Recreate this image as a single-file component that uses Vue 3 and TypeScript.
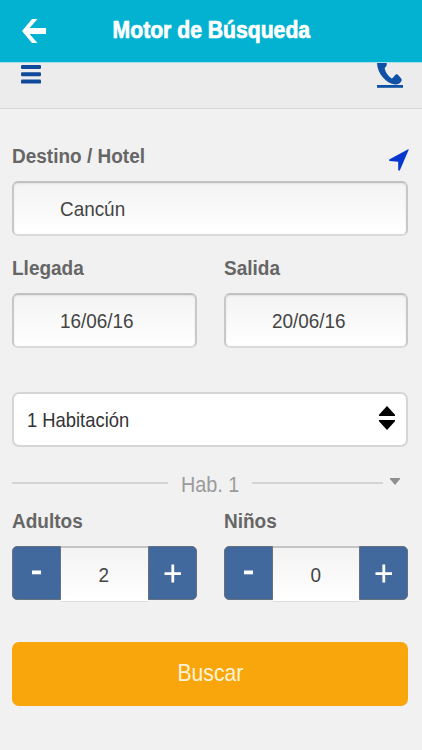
<script setup lang="ts">
import { reactive, ref } from 'vue'

interface Counter {
  label: string
  value: number
}

const destination = ref('Cancún')
const dates = [
  { label: 'Llegada', value: '16/06/16' },
  { label: 'Salida', value: '20/06/16' },
]
const counters = reactive<Counter[]>([
  { label: 'Adultos', value: 2 },
  { label: 'Niños', value: 0 },
])

function step(counter: Counter, delta: number) {
  counter.value = Math.max(0, counter.value + delta)
}
</script>

<template>
  <div class="screen">
    <header class="header">
      <svg class="back" viewBox="0 0 24 24" width="24" height="24">
        <path d="M10 0 H15.5 L7.6 9 H24 V15 H7.6 L15.5 24 H10 L0 12 Z" fill="#fff" />
      </svg>
      <h1 class="title"><span class="squeeze">Motor de Búsqueda</span></h1>
    </header>

    <nav class="toolbar">
      <svg class="menu" viewBox="0 0 20 19" width="20" height="19">
        <g fill="#114a9c">
          <rect y="0" width="20" height="4" rx="1.2" />
          <rect y="7.3" width="20" height="4" rx="1.2" />
          <rect y="14.6" width="20" height="4" rx="1.2" />
        </g>
      </svg>
      <svg class="phone" viewBox="0 0 26 25" width="26" height="25">
        <path
          d="M0 0 H9.7 C10 2 9.8 3 7.6 5.1 C8.2 9.3 10.8 12.8 14.6 15.6 C15.9 15.7 17.4 12.4 18.8 11.6 C19.8 11 20.8 11.6 22.2 13.2 C24.4 15.5 25.5 16.7 24.3 18.3 C22.7 20.6 21 21.7 18.1 21.5 C9 20.4 0.4 10.7 0 0 Z"
          fill="#0f51a6"
        />
        <rect y="22" width="26" height="2.8" fill="#0f51a6" />
      </svg>
    </nav>

    <main class="form">
      <div class="label-row">
        <label class="label"><span class="squeeze">Destino / Hotel</span></label>
        <svg class="locate" viewBox="0 0 20 22" width="20" height="22">
          <path
            d="M19.2 0.2 Q20 0.1 19.6 1.1 L11 21 Q10 22.4 9.2 20.8 V12.7 L0.8 12 Q-0.6 11.4 0.6 10.3 Z"
            fill="#0638cf"
          />
        </svg>
      </div>
      <div class="field"><span class="squeeze">{{ destination }}</span></div>

      <div class="pair dates">
        <div v-for="date in dates" :key="date.label">
          <label class="label"><span class="squeeze">{{ date.label }}</span></label>
          <div class="field"><span class="squeeze">{{ date.value }}</span></div>
        </div>
      </div>

      <div class="select">
        <span class="squeeze">1 Habitación</span>
        <svg viewBox="0 0 16 24" width="16" height="24">
          <path d="M8 0 L16 8.8 V10 H0 V8.8 Z M0 14 H16 V15.2 L8 24 L0 15.2 Z" fill="#000" />
        </svg>
      </div>

      <div class="divider">
        <i class="line"></i>
        <span class="room"><span class="squeeze">Hab. 1</span></span>
        <i class="line"></i>
        <svg class="caret" viewBox="0 0 10 7" width="10" height="7">
          <path d="M0 0 H10 V1 L5 7 L0 1 Z" fill="#8e8e8e" />
        </svg>
      </div>

      <div class="pair counters">
        <div v-for="counter in counters" :key="counter.label">
          <label class="label"><span class="squeeze">{{ counter.label }}</span></label>
          <div class="stepper">
            <button class="step" @click="step(counter, -1)">
              <svg viewBox="0 0 48 52" width="48" height="52">
                <rect x="19" y="23.5" width="9" height="3.8" fill="#fff" />
              </svg>
            </button>
            <span class="count"><span class="squeeze">{{ counter.value }}</span></span>
            <button class="step" @click="step(counter, 1)">
              <svg viewBox="0 0 48 52" width="48" height="52">
                <path d="M15.5 26.7 H32 M23.8 17.6 V35.6" stroke="#fff" stroke-width="2.8" />
              </svg>
            </button>
          </div>
        </div>
      </div>

      <button class="search"><span class="squeeze">Buscar</span></button>
    </main>
  </div>
</template>

<style>
body {
  margin: 0;
  background: #f1f1f1;
}
</style>

<style scoped>
.screen {
  width: 422px;
  height: 750px;
  overflow: hidden;
  background: #f1f1f1;
  font-family: 'Liberation Sans', Arial, sans-serif;
  color: #444;
}

.squeeze {
  display: inline-block;
  transform: scaleX(0.9);
  transform-origin: left center;
  white-space: nowrap;
}

.header {
  display: grid;
  grid-template-columns: 24px 1fr 24px;
  align-items: center;
  height: 62px;
  padding: 0 22px;
  box-sizing: border-box;
  background: #03b2d1;
}

.title {
  margin: 0;
  font-size: 23px;
  line-height: 60px;
  height: 62px;
  text-align: center;
  color: #fff;
  -webkit-text-stroke: 0.7px #fff;
}

.title .squeeze {
  transform: scaleX(0.92);
  transform-origin: center;
}

.toolbar {
  display: flex;
  justify-content: space-between;
  align-items: flex-start;
  height: 47px;
  padding: 0 19px 0 21px;
  box-sizing: border-box;
  border-top: 1px solid #a5e0eb;
  border-bottom: 1px solid #d9d6d6;
  background: #ececec;
}

.menu {
  margin-top: 2px;
}

.form {
  padding: 35px 14px 0 12px;
}

.label-row {
  display: flex;
  justify-content: space-between;
}

.label {
  display: block;
  height: 37px;
  font-size: 20px;
  font-weight: bold;
  line-height: 24px;
  color: #666;
}

.label .squeeze {
  transform: scaleX(0.95);
}

.locate {
  margin: 5px -1px 0 0;
}

.field {
  height: 55px;
  padding-left: 46px;
  box-sizing: border-box;
  border: 2px solid #c8c8c8;
  border-top-color: #c0c0c0;
  border-bottom-color: #dadada;
  border-radius: 6px;
  background: linear-gradient(#f4f4f4, #f9f9f9 50%, #fff);
  box-shadow: inset 0 1px 2px #e2e2e2;
  font-size: 21px;
  line-height: 52px;
}

.pair {
  display: grid;
  grid-template-columns: 1fr 1fr;
  gap: 27px;
}

.dates {
  margin-top: 20px;
}

.select {
  display: flex;
  justify-content: space-between;
  align-items: center;
  height: 55px;
  margin-top: 44px;
  padding: 0 11px 2px 13px;
  box-sizing: border-box;
  border: 2px solid #d6d6d6;
  border-radius: 7px;
  background: #fff;
  font-size: 21px;
  color: #333;
}

.select .squeeze {
  transform: scaleX(0.875);
  padding-top: 3px;
}

.select svg {
  margin-bottom: 2px;
}

.divider {
  display: grid;
  grid-template-columns: 156px 59px 130px 10px;
  column-gap: 13px;
  align-items: center;
  height: 36px;
  margin-top: 17px;
}

.line {
  height: 2px;
  margin-bottom: 1px;
  background: #d4d4d4;
}

.room {
  font-size: 22px;
  line-height: 36px;
  padding-top: 3px;
  color: #9b9b9b;
}

.divider .line:nth-of-type(2) {
  margin-left: -1px;
}

.caret {
  margin: 0 0 5px -6px;
}

.counters {
  margin-top: 9px;
}

.stepper {
  display: grid;
  grid-template-columns: 49px 1fr 49px;
  height: 56px;
}

.step {
  height: 54px;
  padding: 0;
  border: 1px solid #66717c;
  border-radius: 5px 0 0 5px;
  background: #41699d;
  overflow: hidden;
}

.step:last-child {
  border-radius: 0 5px 5px 0;
}

.step svg {
  display: block;
}

.count {
  box-sizing: border-box;
  height: 56px;
  border-top: 2px solid #c4c4c4;
  border-bottom: 1px solid #ddd;
  background: linear-gradient(#f3f3f3, #fff);
  font-size: 21px;
  line-height: 53px;
  text-align: center;
}

.count .squeeze {
  transform-origin: center;
}

.search {
  display: block;
  width: 100%;
  height: 64px;
  margin-top: 40px;
  padding: 0 0 2px;
  border: 0;
  border-radius: 7px;
  background: #f8a60c;
  font-family: inherit;
  font-size: 24px;
  line-height: 60px;
  color: #fff4d9;
}

.search .squeeze {
  transform: scaleX(0.88);
  transform-origin: center;
}
</style>
